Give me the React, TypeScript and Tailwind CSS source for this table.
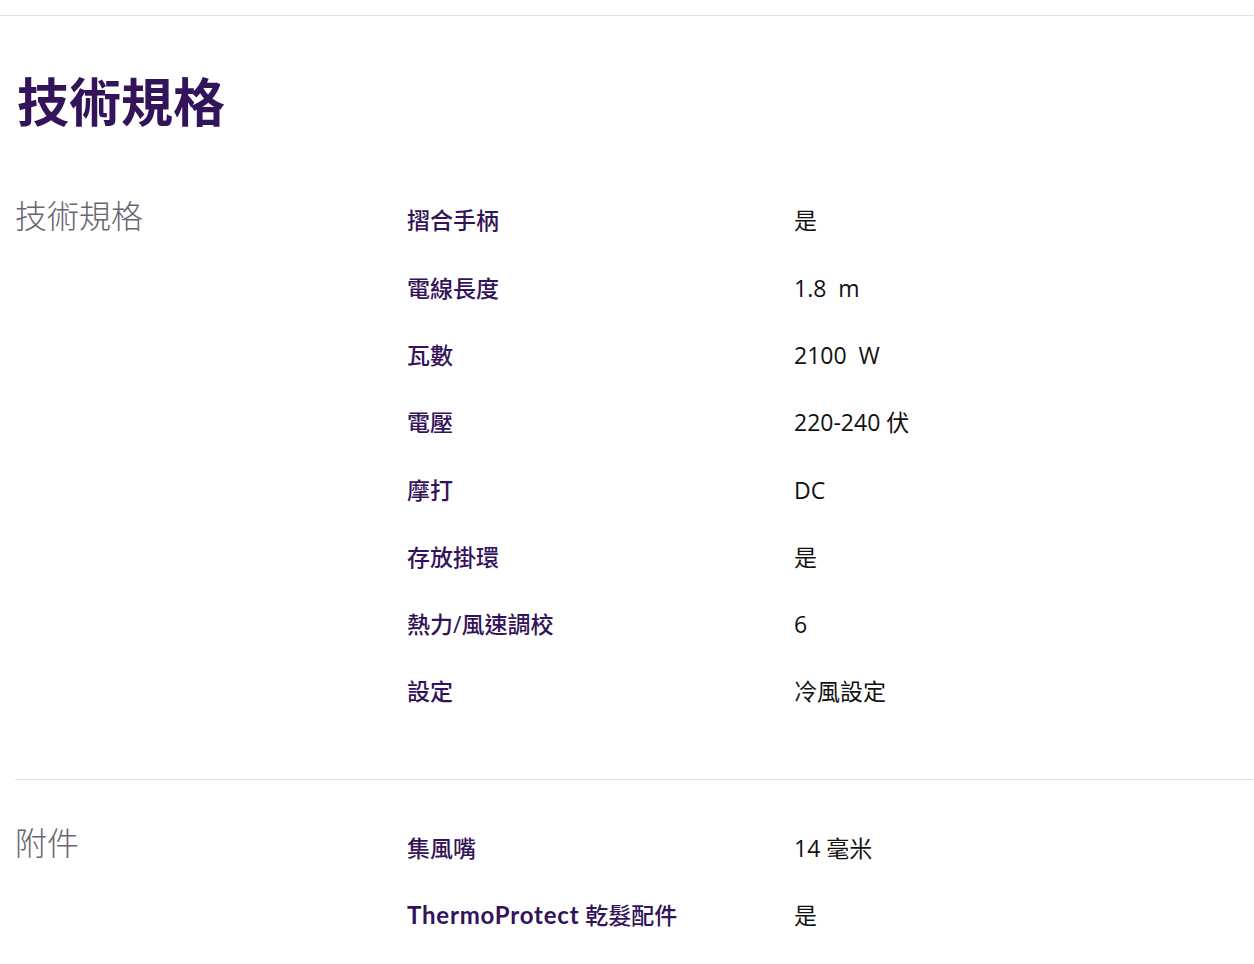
import React from 'react';

type Spec = { label: string; value: string; latin?: boolean };

const specs: Spec[] = [
  { label: '摺合手柄', value: '是' },
  { label: '電線長度', value: '1.8  m' },
  { label: '瓦數', value: '2100  W' },
  { label: '電壓', value: '220-240 伏' },
  { label: '摩打', value: 'DC' },
  { label: '存放掛環', value: '是' },
  { label: '熱力/風速調校', value: '6' },
  { label: '設定', value: '冷風設定' },
];

const accessories: Spec[] = [
  { label: '集風嘴', value: '14 毫米' },
  { label: 'ThermoProtect 乾髮配件', value: '是', latin: true },
];

const cjk = "font-['Open_Sans','Noto_Sans_CJK_TC',sans-serif]";

function SpecRow({ spec }: { spec: Spec }) {
  return (
    <div className="flex h-[67.3px] items-center">
      <div className="w-[387px] shrink-0 text-[23px] font-medium text-[#33135a]">
        {spec.latin ? (
          <>
            <span className="font-['Lato',sans-serif] text-[24px] font-bold tracking-[0.8px]">ThermoProtect</span>
            <span> 乾髮配件</span>
          </>
        ) : (
          spec.label
        )}
      </div>
      <div className="whitespace-pre text-[23px] text-[#111]">{spec.value}</div>
    </div>
  );
}

function Section({ title, rows }: { title: string; rows: Spec[] }) {
  return (
    <div className="flex">
      <div className="w-[407px] shrink-0 pl-[15px] pt-[9px] text-[32px] font-light leading-[40px] text-[#6a6470]">
        {title}
      </div>
      <div className="flex flex-col">
        {rows.map((r) => (
          <SpecRow key={r.label} spec={r} />
        ))}
      </div>
    </div>
  );
}

export default function App() {
  return (
    <div className={`min-h-[964px] bg-white ${cjk}`}>
      <div className="h-[15px]" />
      <div className="border-t border-[#e2e2e2]">
        <h1 className="pl-[17px] pt-[56px] text-[52px] font-bold leading-[60px] text-[#33135a]">技術規格</h1>
        <div className="pt-[55px]">
          <Section title="技術規格" rows={specs} />
        </div>
        <div className="ml-[15px] mt-[54px] border-t border-[#e2e2e2]" />
        <div className="pt-[34px]">
          <Section title="附件" rows={accessories} />
        </div>
      </div>
    </div>
  );
}
